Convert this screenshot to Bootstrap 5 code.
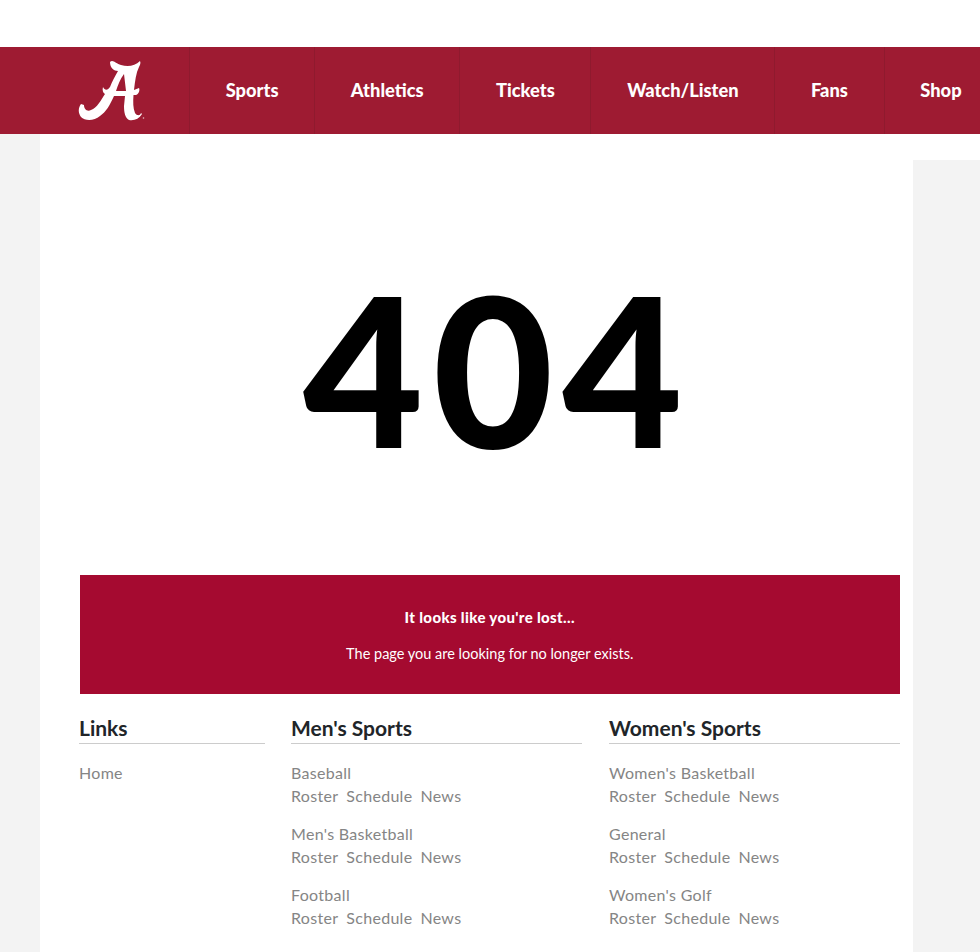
<!DOCTYPE html>
<html lang="en"><head><meta charset="utf-8"><title>404</title>
<link href="https://cdn.jsdelivr.net/npm/bootstrap@5.3.0/dist/css/bootstrap.min.css" rel="stylesheet">
<style>
body{background:#f3f3f3;font-family:"Lato","Noto Sans",sans-serif;overflow:hidden;height:952px}
.topgap{height:47px;background:#fff}
.redbar{height:87px;background:#9e1b32}
.logobox{width:189px;height:87px;padding-left:60px}
.navcell{height:87px;border-left:1px solid #8f1a2e;padding:0 35.700px;color:#fff;font-weight:900;font-size:18.300px;text-decoration:none}
.pagewrap{margin-left:40px;width:873px;background:#fff;height:818px;padding:0 13px 0 39px;position:relative}
.rightwhite{position:absolute;left:873px;top:0;width:67px;height:26px;background:#fff}
.bigfour{height:441px;font-size:208px;font-weight:900;color:#000;line-height:1;padding-top:130px;letter-spacing:9px;padding-left:16px}
.lostbox{background:#a50a30;height:119px;color:#fff;font-size:15px;padding-top:32px;margin-left:.5px}
.lostbox p{margin:0 0 20px;line-height:20px;font-size:14.500px}
.lostbox .hd{font-weight:900;margin-bottom:17px;font-size:15px;letter-spacing:.35px}
.cols{column-gap:26px;margin-top:21.500px}
.colnarrow{width:186px}.colwide{width:291px}.colwide+.colwide{margin-left:1px}
.colhead{font-size:21px;font-weight:700;color:#212529;border-bottom:1px solid #ccc;height:28px;line-height:24px;margin:0 0 17px}
.linkline{color:#858585;font-size:16px;line-height:23px;margin:0;letter-spacing:.3px}
.linkgroup{margin-bottom:15px}
.linkline span{margin-right:8px}
</style></head><body>
<div class="topgap"></div>
<nav class="redbar d-flex">
 <div class="logobox flex-shrink-0"><svg width="100" height="87" viewBox="0 0 100 87"><g transform="translate(0,3)" fill="#fff"><path fill-rule="evenodd" d="M50 12C53 9 56 14 61 15C68 17 75 16 80 11C81 13 80 15 79 17C76 23 75 31 74 40L79 38C80 40 79 44 76 45L73.500 45C73 52 73 58 75 63C77 66 80 66 81 63L82 64C79 69 74 71 69 70C65 68 64 62 64 56L65 46L54 46C50 55 46 62 40 66C34 71 25 71 21 67C18 63 18 58 21 54L24 55C24 59 27 62 31 60C37 58 41 50 45 44C43 43 42 40 43 37C45 41 48 40 50 37C52 32 55 26 58 21C54 21 50 18 50 12ZM64 24C60 29 58 35 56 41L66 41Z"/><circle cx="83.500" cy="68" r=".8" opacity=".7"/></g></svg></div>
 <a class="navcell d-flex align-items-center" href="#">Sports</a>
 <a class="navcell d-flex align-items-center" href="#">Athletics</a>
 <a class="navcell d-flex align-items-center" href="#">Tickets</a>
 <a class="navcell d-flex align-items-center" href="#">Watch/Listen</a>
 <a class="navcell d-flex align-items-center" href="#">Fans</a>
 <a class="navcell d-flex align-items-center" href="#">Shop</a>
</nav>
<div class="pagewrap">
 <div class="rightwhite"></div>
 <div class="bigfour text-center">404</div>
 <div class="lostbox text-center"><p class="hd">It looks like you're lost...</p><p>The page you are looking for no longer exists.</p></div>
 <div class="d-flex cols">
  <div class="colnarrow"><h2 class="colhead">Links</h2><p class="linkline">Home</p></div>
  <div class="colwide"><h2 class="colhead">Men's Sports</h2>
   <div class="linkgroup"><p class="linkline">Baseball</p><p class="linkline"><span>Roster</span><span>Schedule</span><span>News</span></p></div>
   <div class="linkgroup"><p class="linkline">Men's Basketball</p><p class="linkline"><span>Roster</span><span>Schedule</span><span>News</span></p></div>
   <div class="linkgroup"><p class="linkline">Football</p><p class="linkline"><span>Roster</span><span>Schedule</span><span>News</span></p></div>
  </div>
  <div class="colwide"><h2 class="colhead">Women's Sports</h2>
   <div class="linkgroup"><p class="linkline">Women's Basketball</p><p class="linkline"><span>Roster</span><span>Schedule</span><span>News</span></p></div>
   <div class="linkgroup"><p class="linkline">General</p><p class="linkline"><span>Roster</span><span>Schedule</span><span>News</span></p></div>
   <div class="linkgroup"><p class="linkline">Women's Golf</p><p class="linkline"><span>Roster</span><span>Schedule</span><span>News</span></p></div>
  </div>
 </div>
</div>
</body></html>
